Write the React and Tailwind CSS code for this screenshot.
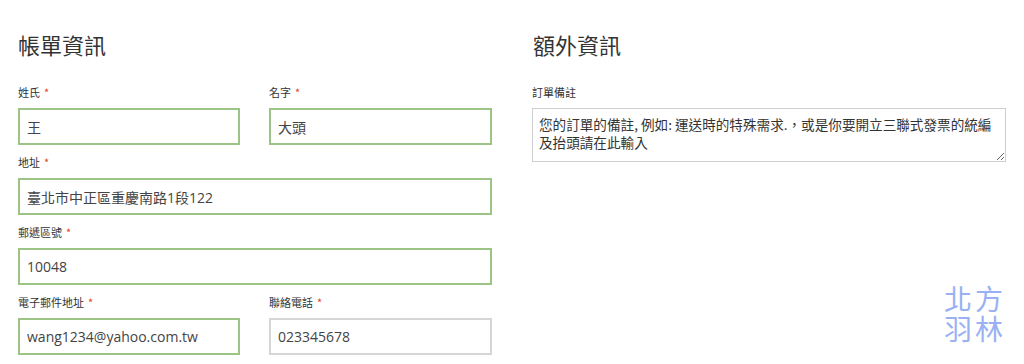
const Label = ({ children, required = true }) => (
  <label className="block h-4 text-[11px] leading-4 text-[#333]">
    {children}
    {required && <span className="ml-1 text-[#e2401c]">*</span>}
  </label>
)

const Field = ({ label, value, className = '', valid = true, first = false }) => (
  <div className={`${first ? '' : 'mt-[9px]'} ${className}`}>
    <Label>{label}</Label>
    <input
      readOnly
      value={value}
      className={`mt-2 block h-[37px] w-full border-2 bg-white px-[7px] text-[14px] text-[#444] outline-none ${
        valid ? 'border-[#9cc585]' : 'border-[#d6d6d6]'
      }`}
      style={{ fontFamily: '"Open Sans", "Noto Sans CJK TC", sans-serif' }}
    />
  </div>
)

export default function App() {
  return (
    <div
      className="relative h-[364px] w-[1024px] overflow-hidden bg-white"
      style={{ fontFamily: '"Noto Sans CJK TC", "Noto Sans", sans-serif' }}
    >
      <div className="flex gap-10 pl-[18px] pt-[29px]">
        <div className="w-[474px]">
          <h3 className="h-[30px] text-[22px] font-normal leading-[30px] text-[#333]">帳單資訊</h3>
          <div className="mt-[25px] flex gap-[29px]">
            <Field first label="姓氏" value="王" className="w-[222px]" />
            <Field first label="名字" value="大頭" className="w-[223px]" />
          </div>
          <Field label="地址" value="臺北市中正區重慶南路1段122" />
          <Field label="郵遞區號" value="10048" />
          <div className="flex gap-[29px]">
            <Field label="電子郵件地址" value="wang1234@yahoo.com.tw" className="w-[222px]" />
            <Field label="聯絡電話" value="023345678" valid={false} className="w-[223px]" />
          </div>
        </div>
        <div className="w-[474px]">
          <h3 className="h-[30px] pl-px text-[22px] font-normal leading-[30px] text-[#333]">額外資訊</h3>
          <div className="mt-[25px]">
            <Label required={false}>訂單備註</Label>
            <textarea
              readOnly
              value="您的訂單的備註, 例如: 運送時的特殊需求.，或是你要開立三聯式發票的統編及抬頭請在此輸入"
              className="mt-2 block h-[54px] w-full resize-y border border-[#cfcfcf] bg-white pl-[6px] pr-[4px] pt-[6px] pb-1 text-[13.6px] leading-[18px] text-[#333] outline-none"
            />
          </div>
        </div>
      </div>
      <p className="absolute left-[944px] top-[283px] w-[66px] text-[28px] leading-[30px] tracking-[3px] text-[#8ea9f2] opacity-90">
        北方羽林
      </p>
    </div>
  )
}
